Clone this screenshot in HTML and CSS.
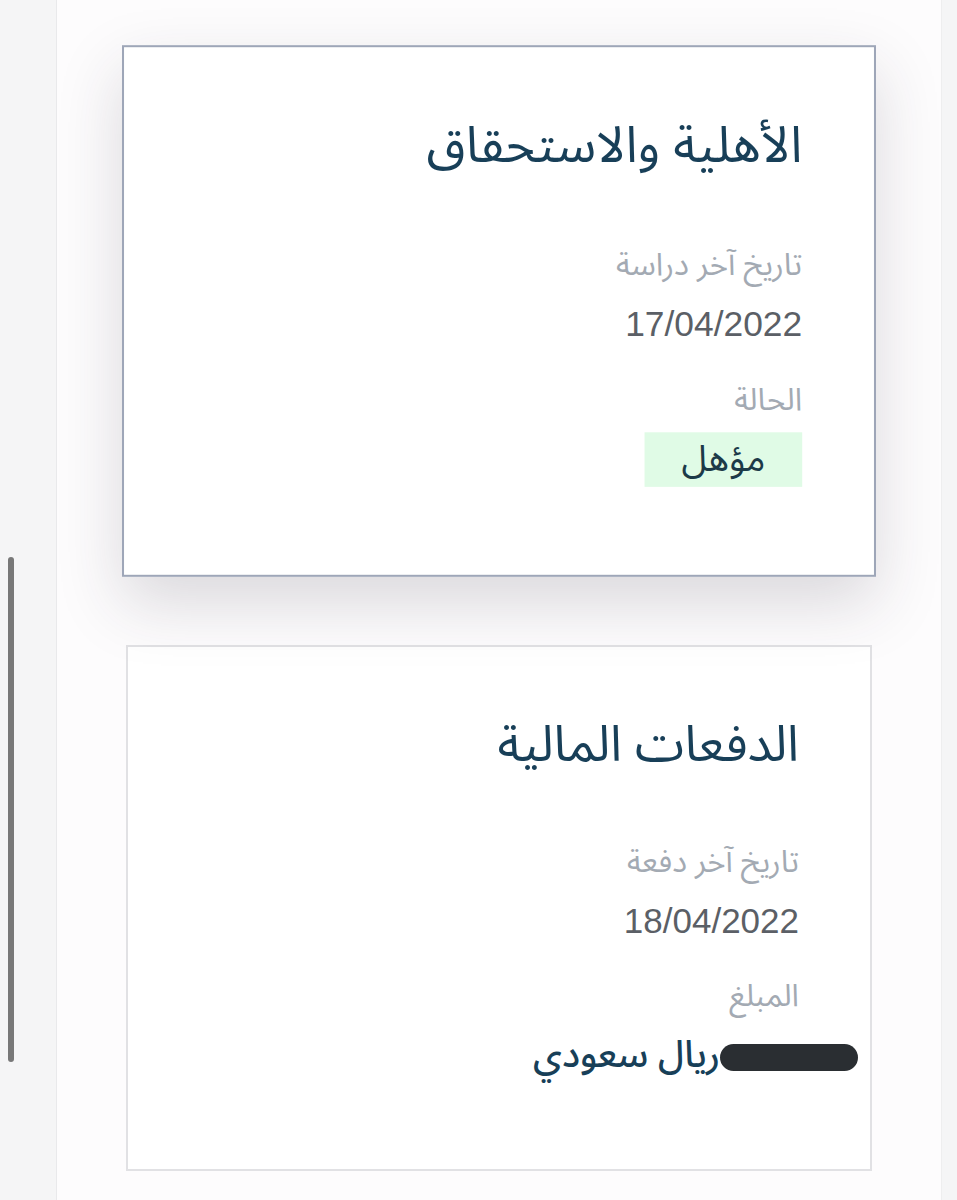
FILE: index.html
```html
<!DOCTYPE html>
<html lang="ar" dir="rtl">
<head>
<meta charset="utf-8">
<link rel="stylesheet" href="styles.css">
</head>
<body>
<div class="scrollbar"></div>
<div class="panel">
    <div class="card raised">
        <h2 class="title">الأهلية والاستحقاق</h2>
        <div class="label first">تاريخ آخر دراسة</div>
        <div class="value date">17/04/2022</div>
        <div class="label">الحالة</div>
        <div class="badge">مؤهل</div>
    </div>
    <div class="card">
        <h2 class="title">الدفعات المالية</h2>
        <div class="label first">تاريخ آخر دفعة</div>
        <div class="value date">18/04/2022</div>
        <div class="label">المبلغ</div>
        <div class="value amount"><span class="hidden-num"></span>ريال سعودي</div>
    </div>
</div>
</body>
</html>
```

FILE: styles.css
```css
html, body{
    margin:0;
    padding:0;
}
body{
    background:#f5f5f6;
    font-family:"Noto Sans Arabic", "DejaVu Sans", sans-serif;
    direction:rtl;
    height:1200px;
    overflow:hidden;
}
.scrollbar{
    position:fixed;
    left:8px;
    top:557px;
    width:6px;
    height:505px;
    border-radius:3px;
    background:#787878;
}
.panel{
    margin-right:15px;
    width:886px;
    height:1200px;
    background:#fdfcfd;
    border-left:1px solid #e9e9eb;
    border-right:1px solid #eeeeef;
    padding:48px 69px 0 69px;
    box-sizing:border-box;
}
.card{
    background:#fff;
    border:2px solid #e1e1e4;
    height:526px;
    box-sizing:border-box;
    padding:70px 71px 0 0;
    margin-bottom:71px;
}
.card.raised{
    border-color:#9ea6b8;
    transform:scale(1.0107);
    box-shadow:0 26px 60px rgba(50,40,60,0.17);
}
.title{
    margin:0;
    font-size:50px;
    font-weight:normal;
    color:#183f58;
    line-height:56px;
}
.label{
    font-size:31px;
    color:#a3aab3;
    line-height:40px;
    margin-top:33px;
}
.label.first{
    margin-top:69px;
}
.value{
    font-size:35px;
    line-height:44px;
    color:#5b5f66;
    margin-top:17px;
}
.date{
    font-family:"Liberation Sans", Arimo, sans-serif;
}
.badge{
    display:inline-block;
    margin-top:12px;
    background:#e0fbe6;
    color:#1c3a48;
    font-size:36px;
    line-height:54px;
    width:156px;
    text-align:center;
}
.amount{
    color:#183f58;
    font-size:37px;
    font-weight:500;
}
.hidden-num{
    display:inline-block;
    vertical-align:middle;
    width:138px;
    height:27px;
    margin-right:-59px;
    border-radius:14px;
    background:#2a2e32;
}
```
